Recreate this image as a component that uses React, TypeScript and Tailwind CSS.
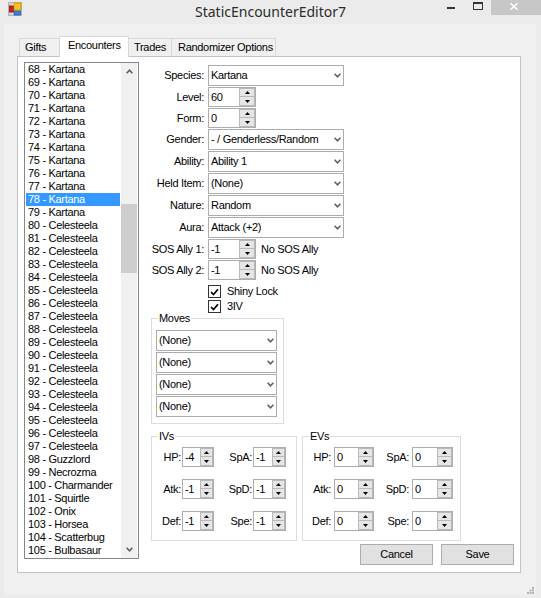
import React from "react";

const items: string[] = (() => {
  const a: string[] = [];
  for (let i = 68; i <= 79; i++) a.push(`${i} - Kartana`);
  for (let i = 80; i <= 97; i++) a.push(`${i} - Celesteela`);
  a.push(
    "98 - Guzzlord",
    "99 - Necrozma",
    "100 - Charmander",
    "101 - Squirtle",
    "102 - Onix",
    "103 - Horsea",
    "104 - Scatterbug",
    "105 - Bulbasaur"
  );
  return a;
})();

function Chevron({ up = false }: { up?: boolean }) {
  return (
    <svg width="7" height="5" viewBox="0 0 7 5">
      <path
        d={up ? "M0.6 4.2 L3.5 1.2 L6.4 4.2" : "M0.6 0.8 L3.5 3.8 L6.4 0.8"}
        fill="none"
        stroke="#606060"
        strokeWidth="1.6"
      />
    </svg>
  );
}

function Tri({ up = false }: { up?: boolean }) {
  return (
    <svg width="5" height="3" viewBox="0 0 5 3">
      <path d={up ? "M0 3 L2.5 0 L5 3 Z" : "M0 0 L5 0 L2.5 3 Z"} fill="#000" />
    </svg>
  );
}

function Combo({ text, className }: { text: string; className: string }) {
  return (
    <div className={`flex h-[21px] items-center border border-[#acacac] bg-white ${className}`}>
      <span className="flex-1 truncate pl-[2px] leading-[13px]">{text}</span>
      <span className="mr-[2px] flex">
        <Chevron />
      </span>
    </div>
  );
}

function Spin({ className }: { className: string }) {
  return (
    <div className={`flex h-[18px] flex-col border border-[#b9b9b9] bg-[#e6e6e6] ${className}`}>
      <div className="flex h-[8px] items-center justify-center border-b border-[#b9b9b9]">
        <Tri up />
      </div>
      <div className="flex flex-1 items-center justify-center">
        <Tri />
      </div>
    </div>
  );
}

function Num({ value, className, spin }: { value: string; className: string; spin: string }) {
  return (
    <div className={`flex h-[20px] border border-[#abadb3] bg-white ${className}`}>
      <span className="flex-1 pl-[2px] leading-[18px]">{value}</span>
      <Spin className={spin} />
    </div>
  );
}

function Check({ label }: { label: string }) {
  return (
    <div className="ml-[62px] flex h-[15px] items-center">
      <div className="flex h-[13px] w-[13px] items-center justify-center border border-[#333333] bg-white">
        <svg width="9" height="8" viewBox="0 0 9 8">
          <path d="M1 4 L3.5 6.5 L8 1.2" stroke="#000" strokeWidth="1.7" fill="none" />
        </svg>
      </div>
      <span className="ml-[6px] leading-[13px]">{label}</span>
    </div>
  );
}

function FormRow({ label, children, className }: { label: string; children: React.ReactNode; className: string }) {
  return (
    <div className={`flex items-center ${className}`}>
      <span className="w-[58px] whitespace-nowrap text-right leading-[13px]">{label}</span>
      <div className="ml-[4px] flex items-center">{children}</div>
    </div>
  );
}

function AppIcon() {
  return (
    <svg width="14" height="14" viewBox="0 0 14 14">
      <rect x="0.5" y="0.5" width="13" height="13" fill="#e4e4e4" stroke="#b5b5b5" />
      <rect x="1" y="1" width="3" height="3" fill="#cfcfcf" />
      <rect x="1" y="10" width="3" height="3" fill="#cfcfcf" />
      <rect x="1.5" y="4" width="4" height="6" fill="#d21f1f" stroke="#8b1010" strokeWidth="0.8" />
      <rect x="6" y="1" width="7" height="7" fill="#f5c518" stroke="#d08a00" strokeWidth="0.8" />
      <rect x="6" y="9" width="6.5" height="4" fill="#3f7fe0" stroke="#1f56b0" strokeWidth="0.8" />
    </svg>
  );
}

function Grip() {
  return (
    <svg width="7" height="7" viewBox="0 0 7 7">
      <rect x="5" y="0" width="2" height="2" fill="#b4b4b4" />
      <rect x="2.5" y="2.5" width="2" height="2" fill="#b4b4b4" />
      <rect x="5" y="2.5" width="2" height="2" fill="#b4b4b4" />
      <rect x="0" y="5" width="2" height="2" fill="#b4b4b4" />
      <rect x="2.5" y="5" width="2" height="2" fill="#b4b4b4" />
      <rect x="5" y="5" width="2" height="2" fill="#b4b4b4" />
    </svg>
  );
}

export default function App() {
  const ivRows = [
    ["HP:", "-4", "SpA:", "-1"],
    ["Atk:", "-1", "SpD:", "-1"],
    ["Def:", "-1", "Spe:", "-1"],
  ];
  const evRows = [
    ["HP:", "0", "SpA:", "0"],
    ["Atk:", "0", "SpD:", "0"],
    ["Def:", "0", "Spe:", "0"],
  ];
  return (
    <div className="flex h-[598px] w-[541px] flex-col overflow-hidden bg-[#ebebeb] font-['Liberation_Sans',Arial,sans-serif] text-[11px] tracking-[-0.3px] text-black">
      {/* Title bar */}
      <div className="grid h-[24px] grid-cols-[1fr_auto_1fr]">
        <div className="pl-[8px] pt-[2px]">
          <AppIcon />
        </div>
        <div className="pt-[2px] font-['Noto_Sans',sans-serif] text-[14px] leading-[20px] tracking-normal text-[#2b2b2b]">
          StaticEncounterEditor7
        </div>
        <div className="flex items-start justify-end">
          <div className="flex h-[15px] w-[26px] justify-center pt-[7px]">
            <div className="h-[2px] w-[8px] bg-[#333333]" />
          </div>
          <div className="flex h-[15px] w-[27px] justify-center pt-[2px]">
            <div className="h-[8px] w-[10px] border border-t-2 border-[#333333]" />
          </div>
          <div className="flex h-[15px] w-[50px] justify-center bg-[#c7c7c7] pr-[4px] pt-[3px]">
            <svg width="8" height="7" viewBox="0 0 8 7">
              <path d="M0.5 0.3 L7.5 6.7 M7.5 0.3 L0.5 6.7" stroke="#fff" strokeWidth="1.5" />
            </svg>
          </div>
        </div>
      </div>

      {/* Client area */}
      <div className="ml-[4px] flex h-[571px] w-[532px] flex-col bg-[#f0f0f0]">
        {/* Tabs */}
        <div className="ml-[15px] mt-[12px] flex h-[20px] items-end whitespace-nowrap">
          <div className="h-[18px] w-[42px] border-l border-t border-[#d9d9d9] bg-[#f0f0f0] pl-[5px] pt-[2px] leading-[13px]">
            Gifts
          </div>
          <div className="relative z-10 -mx-[2px] -mb-[1px] h-[21px] w-[70px] border-x border-t border-[#d9d9d9] bg-white pl-[8px] pt-[2px] leading-[13px]">
            Encounters
          </div>
          <div className="h-[18px] w-[45px] border-r border-t border-[#d9d9d9] bg-[#f0f0f0] pl-[7px] pt-[2px] leading-[13px]">
            Trades
          </div>
          <div className="h-[18px] w-[104px] border-r border-t border-[#d9d9d9] bg-[#f0f0f0] pl-[6px] pt-[2px] leading-[13px]">
            Randomizer Options
          </div>
        </div>

        {/* Tab page */}
        <div className="ml-[13px] flex h-[517px] w-[504px] items-start border border-[#c2c2c2] bg-white">
          {/* List box */}
          <div className="ml-[6px] mt-[5px] flex h-[497px] w-[115px] border border-[#828790] bg-white">
            <div className="w-[96px]">
              {items.map((t, i) => (
                <div
                  key={t}
                  className={`ml-[1px] h-[13px] w-[94px] whitespace-nowrap pl-[2px] leading-[13px] ${
                    i === 10 ? "bg-[#3399ff] text-white" : ""
                  }`}
                >
                  {t}
                </div>
              ))}
            </div>
            <div className="flex w-[16px] flex-col bg-[#f0f0f0]">
              <div className="flex h-[17px] items-center justify-center">
                <Chevron up />
              </div>
              <div className="mt-[124px] h-[69px] bg-[#cdcdcd]" />
              <div className="flex-1" />
              <div className="flex h-[17px] items-center justify-center">
                <Chevron />
              </div>
            </div>
          </div>

          {/* Right column */}
          <div className="ml-[7px] mt-[8px] flex w-[374px] flex-col">
            <FormRow label="Species:" className="">
              <Combo text="Kartana" className="w-[136px]" />
            </FormRow>
            <FormRow label="Level:" className="mt-[1px]">
              <Num value="60" className="w-[48px]" spin="w-[16px]" />
            </FormRow>
            <FormRow label="Form:" className="mt-[1px]">
              <Num value="0" className="w-[48px]" spin="w-[16px]" />
            </FormRow>
            <FormRow label="Gender:" className="mt-[1px]">
              <Combo text="- / Genderless/Random" className="w-[136px]" />
            </FormRow>
            <FormRow label="Ability:" className="mt-[1px]">
              <Combo text="Ability 1" className="w-[136px]" />
            </FormRow>
            <FormRow label="Held Item:" className="mt-[1px]">
              <Combo text="(None)" className="w-[136px]" />
            </FormRow>
            <FormRow label="Nature:" className="mt-[1px]">
              <Combo text="Random" className="w-[136px]" />
            </FormRow>
            <FormRow label="Aura:" className="mt-[1px]">
              <Combo text="Attack (+2)" className="w-[136px]" />
            </FormRow>
            <FormRow label="SOS Ally 1:" className="mt-[1px]">
              <Num value="-1" className="w-[48px]" spin="w-[16px]" />
              <span className="ml-[5px] leading-[13px]">No SOS Ally</span>
            </FormRow>
            <FormRow label="SOS Ally 2:" className="mt-[1px]">
              <Num value="-1" className="w-[48px]" spin="w-[16px]" />
              <span className="ml-[5px] leading-[13px]">No SOS Ally</span>
            </FormRow>
            <div className="mt-[4px]">
              <Check label="Shiny Lock" />
            </div>
            <Check label="3IV" />

            {/* Moves */}
            <div className="relative ml-[5px] mt-[4px] flex h-[106px] w-[133px] flex-col gap-[1px] border border-[#dcdcdc] pl-[4px] pt-[11px]">
              <span className="absolute -top-[7px] left-[6px] bg-white px-[1px] leading-[13px]">Moves</span>
              <Combo text="(None)" className="w-[121px]" />
              <Combo text="(None)" className="w-[121px]" />
              <Combo text="(None)" className="w-[121px]" />
              <Combo text="(None)" className="w-[121px]" />
            </div>

            {/* IVs / EVs */}
            <div className="mt-[12px] flex">
              <div className="relative ml-[5px] flex h-[105px] w-[146px] flex-col gap-[12px] border border-[#dcdcdc] pt-[10px]">
                <span className="absolute -top-[7px] left-[6px] bg-white px-[1px] leading-[13px]">IVs</span>
                {ivRows.map((r) => (
                  <div key={r[0]} className="flex h-[20px] items-center">
                    <span className="w-[29px] text-right leading-[13px]">{r[0]}</span>
                    <Num value={r[1]} className="ml-[1px] w-[32px]" spin="w-[13px]" />
                    <span className="w-[38px] text-right leading-[13px]">{r[2]}</span>
                    <Num value={r[3]} className="ml-[1px] w-[33px]" spin="w-[13px]" />
                  </div>
                ))}
              </div>
              <div className="relative ml-[5px] flex h-[105px] w-[159px] flex-col gap-[12px] border border-[#dcdcdc] pt-[10px]">
                <span className="absolute -top-[7px] left-[6px] bg-white px-[1px] leading-[13px]">EVs</span>
                {evRows.map((r) => (
                  <div key={r[0]} className="flex h-[20px] items-center">
                    <span className="w-[30px] pr-[2px] text-right leading-[13px]">{r[0]}</span>
                    <Num value={r[1]} className="ml-[1px] w-[40px]" spin="w-[15px]" />
                    <span className="w-[37px] pr-[2px] text-right leading-[13px]">{r[2]}</span>
                    <Num value={r[3]} className="ml-[1px] w-[41px]" spin="w-[15px]" />
                  </div>
                ))}
              </div>
            </div>

            {/* Buttons */}
            <div className="mt-[3px] flex justify-end gap-[8px] pr-[6px]">
              <div className="flex h-[21px] w-[73px] items-center justify-center border border-[#adadad] bg-[#e1e1e1] leading-[13px]">
                Cancel
              </div>
              <div className="flex h-[21px] w-[73px] items-center justify-center border border-[#adadad] bg-[#e1e1e1] leading-[13px]">
                Save
              </div>
            </div>
          </div>
        </div>

        <div className="mt-[14px] flex justify-end pr-[2px]">
          <Grip />
        </div>
      </div>
    </div>
  );
}
